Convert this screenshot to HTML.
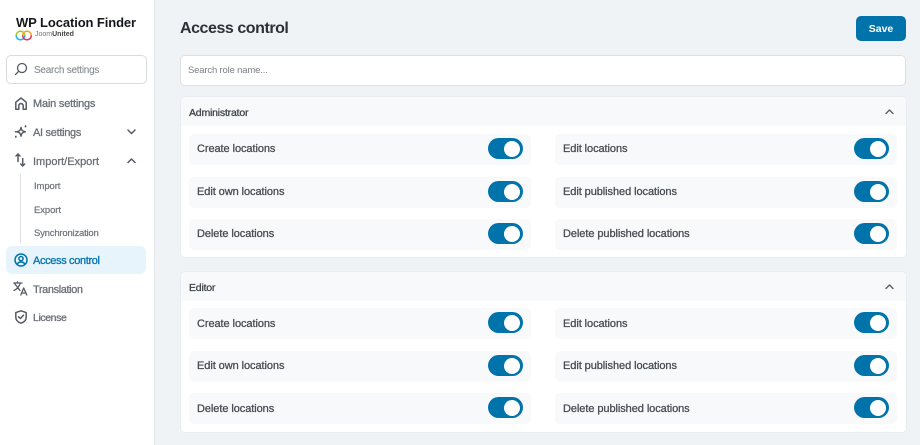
<!DOCTYPE html>
<html><head><meta charset="utf-8"><style>
html,body{margin:0;padding:0}
body{width:920px;height:445px;overflow:hidden;background:#f0f3f6;position:relative;font-family:"Liberation Sans",sans-serif}
.a{position:absolute;white-space:nowrap}
#side{left:0;top:0;width:154px;height:445px;background:#fff;border-right:1px solid #e4e7ec}
.nav{font-size:11px;color:#6b7078;line-height:14px;-webkit-text-stroke:.3px currentColor}
.sub{font-size:9.5px;color:#74787f;letter-spacing:-.1px;line-height:14px;-webkit-text-stroke:.25px currentColor}
svg{position:absolute;overflow:visible;fill:none;stroke:#555a63;stroke-width:1.5;stroke-linecap:round;stroke-linejoin:round}
.panel{position:absolute;left:180px;width:725px;height:160px;background:#fff;border:1px solid #e9ecf0;border-radius:5px;overflow:hidden}
.ph{position:absolute;left:0;top:0;right:0;height:29px;background:#f8f9fb;font-size:10.5px;color:#3f434a;line-height:32px;padding-left:8px;letter-spacing:-.2px;-webkit-text-stroke:.3px currentColor}
.row{position:absolute;width:342px;height:31px;background:#f8f9fb;border-radius:5px;font-size:11px;color:#484c54;line-height:30px;text-indent:8px;letter-spacing:-.07px;-webkit-text-stroke:.3px currentColor}
.e .row{line-height:32px}
.e .row.m{line-height:30px}
.tg{position:absolute;right:8px;top:4px;width:35px;height:21px;background:#0073aa;border-radius:11px}
.tg:after{content:"";position:absolute;right:3px;top:2.5px;width:16px;height:16px;background:#fff;border-radius:50%}
</style></head><body>
<div class="a" id="side"></div>
<div class="a" style="left:16px;top:14px;font-size:13px;font-weight:700;color:#15171c;letter-spacing:-.1px;line-height:17px">WP Location Finder</div>
<svg style="left:15px;top:30px;stroke-linecap:butt" width="18" height="11" viewBox="0 0 18 11"><path d="M1.2 5.5A4.3 4.3 0 0 1 9.8 5.5" stroke="#a9c92f" stroke-width="1.6"/><path d="M1.2 5.5A4.3 4.3 0 0 0 9.8 5.5" stroke="#1fb6e8" stroke-width="1.6"/><path d="M7.7 5.5A4.3 4.3 0 0 1 16.3 5.5" stroke="#f5a52e" stroke-width="1.6"/><path d="M7.7 5.5A4.3 4.3 0 0 0 16.3 5.5" stroke="#e8315f" stroke-width="1.6"/></svg>
<div class="a" style="left:35px;top:30px;font-size:7px;color:#777;line-height:10px">Joom<b style="color:#444">United</b></div>
<div class="a" style="left:6px;top:55px;width:139px;height:27px;border:1px solid #d8dbe0;border-radius:5px;background:#fff"></div>
<svg style="left:14px;top:62px;stroke-width:1.3" width="14" height="14" viewBox="0 0 14 14"><circle cx="8" cy="6" r="4.5"/><path d="M4.7 9.3L1.5 12.5"/></svg>
<div class="a" style="left:34px;top:64px;font-size:10px;color:#8c9097;letter-spacing:-.25px;line-height:14px;-webkit-text-stroke:.15px currentColor">Search settings</div>

<svg style="left:15px;top:97px" width="12" height="13" viewBox="0 0 12 13"><path d="M.8 5.2L6 1L11.2 5.2V12.2H8.2V8.6C8.2 7.4 7.2 6.6 6 6.6C4.8 6.6 3.8 7.4 3.8 8.6V12.2H.8Z"/></svg>
<div class="a nav" style="left:33px;top:97px;letter-spacing:-.2px">Main settings</div>
<svg style="left:15px;top:125px" width="12" height="13" viewBox="0 0 12 13"><path d="M6 2.5C6.4 5.3 7.4 6.3 10.3 6.8C7.4 7.3 6.4 8.4 6 11.2C5.6 8.4 4.6 7.3 1.7 6.8C4.6 6.3 5.6 5.3 6 2.5Z"/><path d="M10.5 1V1.6M.8 11.5V12M.6 6.8H.7" stroke-width="1.7"/></svg>
<div class="a nav" style="left:33px;top:126px;letter-spacing:-.3px">AI settings</div>
<svg style="left:127px;top:129px" width="9" height="6" viewBox="0 0 9 6"><path d="M1 1L4.5 4.5L8 1"/></svg>
<svg style="left:15px;top:153px" width="11" height="14" viewBox="0 0 11 14"><path d="M3 8.5V1M1 3L3 1L5 3M7.7 5.5V13M5.7 11L7.7 13L9.7 11"/></svg>
<div class="a nav" style="left:33px;top:155px">Import/Export</div>
<svg style="left:127px;top:158px" width="9" height="6" viewBox="0 0 9 6"><path d="M1 4.5L4.5 1L8 4.5"/></svg>
<div class="a" style="left:20px;top:174px;width:1px;height:69px;background:#dcdfe3"></div>
<div class="a sub" style="left:34px;top:180px">Import</div>
<div class="a sub" style="left:34px;top:204px">Export</div>
<div class="a sub" style="left:34px;top:227px;letter-spacing:-.2px">Synchronization</div>
<div class="a" style="left:6px;top:246px;width:140px;height:28px;background:#e8f4fb;border-radius:6px"></div>
<svg style="left:14px;top:253px;stroke:#0073aa;stroke-width:1.5" width="14" height="14" viewBox="0 0 14 14"><circle cx="7" cy="7" r="6"/><circle cx="7" cy="5.6" r="2.1"/><path d="M3.2 11.3C4 9.5 5.4 9 7 9C8.6 9 10 9.5 10.8 11.3"/></svg>
<div class="a nav" style="left:33px;top:254px;color:#0073aa;letter-spacing:-.35px">Access control</div>
<svg style="left:13px;top:281px;stroke-width:1.3" width="15" height="15" viewBox="0 0 15 15"><path d="M.8 2H9M4.5.8V2M1.2 2L7 9.5M7.2 2C6.5 5 4 8 1 9.5M7.8 14L10.7 7L13.8 14M8.7 12H12.9"/></svg>
<div class="a nav" style="left:33px;top:283px;letter-spacing:-.4px">Translation</div>
<svg style="left:15px;top:310px" width="12" height="14" viewBox="0 0 12 14"><path d="M6 .8L11.2 2.6V7C11.2 10 9 12.2 6 13.2C3 12.2 .8 10 .8 7V2.6Z"/><path d="M3.6 6.8L5.4 8.5L8.5 5.2"/></svg>
<div class="a nav" style="left:33px;top:311px;font-size:10.5px;letter-spacing:-.4px">License</div>

<div class="a" style="left:180px;top:18px;font-size:16px;font-weight:700;color:#2c3037;letter-spacing:-.45px;line-height:21px">Access control</div>
<div class="a" style="left:856px;top:16px;width:50px;height:25px;background:#0073aa;border-radius:5px;color:#fff;font-size:10.5px;font-weight:700;text-align:center;line-height:26px">Save</div>
<div class="a" style="left:180px;top:55px;width:724px;height:29px;background:#fff;border:1px solid #dcdfe4;border-radius:5px;font-size:9.5px;color:#7b7f86;line-height:30px;text-indent:7px;letter-spacing:-.17px">Search role name...</div>

<div class="panel" style="top:96px">
<div class="ph">Administrator</div>
<svg style="left:704px;top:12px;stroke-width:1.3" width="9" height="6" viewBox="0 0 9 6"><path d="M1 4.5L4.5 1L8 4.5"/></svg>
<div class="row" style="left:8px;top:37px">Create locations<i class="tg"></i></div>
<div class="row" style="left:374px;top:37px">Edit locations<i class="tg"></i></div>
<div class="row" style="left:8px;top:80px">Edit own locations<i class="tg"></i></div>
<div class="row" style="left:374px;top:80px">Edit published locations<i class="tg"></i></div>
<div class="row" style="left:8px;top:122px">Delete locations<i class="tg"></i></div>
<div class="row" style="left:374px;top:122px">Delete published locations<i class="tg"></i></div>
</div>
<div class="panel e" style="top:271px">
<div class="ph">Editor</div>
<svg style="left:704px;top:12px;stroke-width:1.3" width="9" height="6" viewBox="0 0 9 6"><path d="M1 4.5L4.5 1L8 4.5"/></svg>
<div class="row" style="left:8px;top:36px">Create locations<i class="tg"></i></div>
<div class="row" style="left:374px;top:36px">Edit locations<i class="tg"></i></div>
<div class="row m" style="left:8px;top:79px">Edit own locations<i class="tg"></i></div>
<div class="row m" style="left:374px;top:79px">Edit published locations<i class="tg"></i></div>
<div class="row" style="left:8px;top:121px">Delete locations<i class="tg"></i></div>
<div class="row" style="left:374px;top:121px">Delete published locations<i class="tg"></i></div>
</div>
</body></html>
